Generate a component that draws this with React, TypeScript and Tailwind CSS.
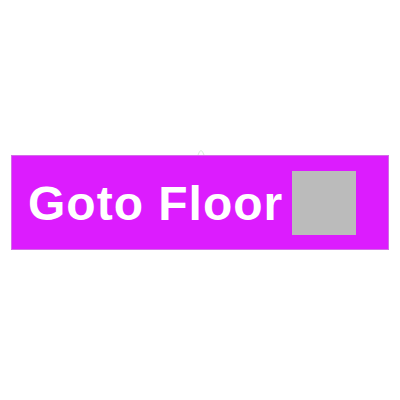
export default function App() {
  return (
    <div className="w-[400px] h-[400px] bg-white flex flex-col pt-[148px] px-[11px]">
      <div className="relative h-[7px] w-full">
        <svg className="absolute left-[186px] top-0" width="8" height="7" viewBox="0 0 8 7">
          <path d="M1 7 Q4 -2 7 7" fill="none" stroke="#cfe8cf" strokeWidth="0.8" />
        </svg>
      </div>
      <div className="w-[378px] h-[95px] bg-[#dc1cfe] flex items-center pl-[16px] pr-[32px] justify-between border border-[#c8e6c8]/40">
        <span
          className="text-white font-bold text-[48px] leading-none pt-[2px] tracking-[1px]"
          style={{ fontFamily: '"Liberation Sans", Arial, sans-serif' }}
        >
          Goto Floor
        </span>
        <div className="w-[64px] h-[64px] bg-[#bbbbbb]" />
      </div>
    </div>
  );
}
